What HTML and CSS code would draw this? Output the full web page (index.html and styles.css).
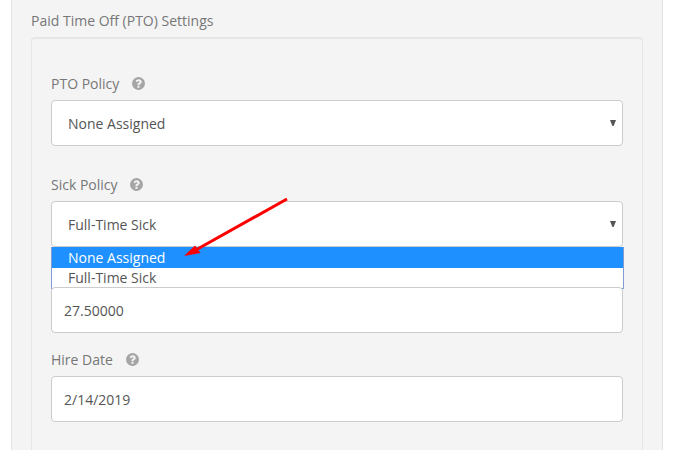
FILE: index.html
```html
<!DOCTYPE html>
<html lang="en">

<head>
    <meta charset="UTF-8">
    <title>PTO Settings</title>
    <link rel="stylesheet" href="styles.css">
</head>

<body>
    <svg width="0" height="0" class="defs">
        <symbol id="help" viewBox="0 0 1792 1792">
            <path d="M1024 1376v-192q0-14-9-23t-23-9h-192q-14 0-23 9t-9 23v192q0 14 9 23t23 9h192q14 0 23-9t9-23zm256-672q0-88-55.500-163t-138.500-116-170-41q-243 0-371 213-15 24 8 42l132 100q7 6 19 6 16 0 25-12 53-68 86-92 34-24 86-24 48 0 85.500 26t37.500 59q0 38-20 61t-68 45q-63 28-115.500 86.500t-52.500 125.500v36q0 14 9 23t23 9h192q14 0 23-9t9-23q0-19 21.500-49.500t54.500-49.500q32-18 49-28.500t46-35 44.500-48 28-60.500 12.500-81zm384 192q0 209-103 385.500t-279.500 279.500-385.500 103-385.500-103-279.500-279.500-103-385.500 103-385.500 279.500-279.500 385.500-103 385.500 103 279.500 279.500 103 385.500z"/>
        </symbol>
    </svg>

    <div class="panel">
        <div class="panelTitle">Paid Time Off (PTO) Settings</div>
        <div class="group">
            <!-- PTO POLICY -->
            <div class="field fieldPto">
                <div class="fieldLabel">PTO Policy <svg class="helpIcon"><use href="#help"/></svg></div>
                <div class="control select">
                    <span>None Assigned</span>
                    <svg class="caret" viewBox="0 0 6 6"><polygon points="0,0 6,0 3.600,6 2.400,6"/></svg>
                </div>
            </div>

            <!-- SICK POLICY -->
            <div class="field fieldSick">
                <div class="fieldLabel">Sick Policy <svg class="helpIcon"><use href="#help"/></svg></div>
                <div class="control select">
                    <span>Full-Time Sick</span>
                    <svg class="caret" viewBox="0 0 6 6"><polygon points="0,0 6,0 3.600,6 2.400,6"/></svg>
                </div>
                <ul class="dropdown">
                    <li class="selected">None Assigned</li>
                    <li>Full-Time Sick</li>
                </ul>
            </div>

            <!-- HOURS, its label is behind the dropdown -->
            <div class="field fieldHours">
                <div class="control">27.50000</div>
            </div>

            <!-- HIRE DATE -->
            <div class="field">
                <div class="fieldLabel">Hire Date <svg class="helpIcon"><use href="#help"/></svg></div>
                <div class="control">2/14/2019</div>
            </div>
        </div>
    </div>

    <svg class="arrow" width="673" height="450" viewBox="0 0 673 450">
        <line x1="287" y1="199" x2="194" y2="251"/>
        <polygon points="184,256 195,245.500 200.500,253"/>
    </svg>
</body>

</html>
```

FILE: styles.css
```css
html,
body {
    height: 450px;
    overflow: hidden;
}

body {
    margin: 0;
    background: #fff;
    font-family: "Open Sans", sans-serif;
    font-size: 14px;
    color: #555;
}

.defs {
    position: absolute;
}

.panel {
    box-sizing: border-box;
    margin: 0 10px 0 11px;
    padding: 11px 19px 0;
    height: 450px;
    background: #f4f4f4;
    border-left: 1px solid #e3e3e3;
    border-right: 1px solid #e3e3e3;
}

.panelTitle {
    line-height: 19px;
    height: 26px;
    color: #777;
}

.group {
    box-sizing: border-box;
    padding: 34px 19px 0;
    height: 413px;
    border: 1px solid #e6e6e6;
    border-top-width: 2px;
    border-bottom: 0;
    border-radius: 4px 4px 0 0;
}

.field {
    position: relative;
    margin-bottom: 19px;
}

.fieldPto {
    margin-bottom: 28px;
}

.fieldSick {
    margin-bottom: 40px;
}

.fieldHours {
    margin-bottom: 16px;
}

.fieldLabel {
    height: 27px;
    line-height: 22px;
    color: #777;
}

.helpIcon {
    width: 15px;
    height: 15px;
    margin-left: 8px;
    vertical-align: -2px;
    fill: #a5a5a5;
}

.control {
    display: flex;
    align-items: center;
    height: 46px;
    box-sizing: border-box;
    padding: 0 12px;
    background: #fff;
    border: 1px solid #ccc;
    border-radius: 4px;
}

.select {
    justify-content: space-between;
    padding: 0 6px 0 16px;
}

.caret {
    width: 6px;
    height: 6px;
    margin-top: -1px;
    fill: #555;
}

/* lista aberta do select */
.dropdown {
    position: absolute;
    left: 0;
    right: -1px;
    top: 100%;
    margin: 0;
    padding: 0;
    list-style: none;
    background: #fff;
    border: 1px solid #7f9dd0;
    border-top: 0;
}

.dropdown li {
    height: 20.500px;
    line-height: 20px;
    padding-left: 16px;
}

.dropdown .selected {
    line-height: 21px;
    background: #1e90ff;
    color: #fff;
}

.arrow {
    position: absolute;
    left: 0;
    top: 0;
}

.arrow line {
    stroke: #f00;
    stroke-width: 3;
}

.arrow polygon {
    fill: #f00;
}
```
